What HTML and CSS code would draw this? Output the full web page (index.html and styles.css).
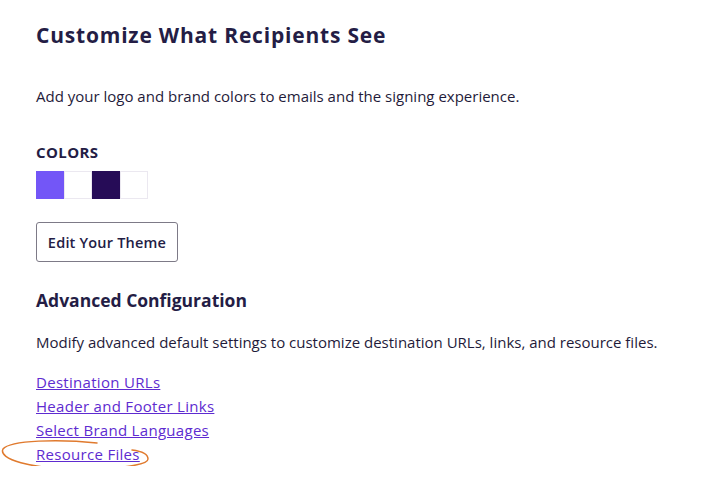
FILE: index.html
```html
<!DOCTYPE html>
<html>
<head>
<meta charset="utf-8">
<link rel="stylesheet" href="styles.css">
</head>
<body>
<main class="page">
  <h1 class="title">Customize What Recipients See</h1>
  <p class="lead">Add your logo and brand colors to emails and the signing experience.</p>
  <h2 class="label">COLORS</h2>
  <div class="swatches">
    <span class="swatch swatch-primary"></span>
    <span class="swatch swatch-white"></span>
    <span class="swatch swatch-dark"></span>
    <span class="swatch swatch-white"></span>
  </div>
  <button class="btn">Edit Your Theme</button>
  <h2 class="subtitle">Advanced Configuration</h2>
  <p class="desc">Modify advanced default settings to customize destination URLs, links, and resource files.</p>
  <ul class="links">
    <li><a href="#">Destination URLs</a></li>
    <li><a href="#">Header and Footer Links</a></li>
    <li><a href="#">Select Brand Languages</a></li>
    <li class="circled"><a href="#">Resource Files</a>
      <svg class="scribble" width="160" height="36" viewBox="0 0 160 36">
        <path d="M97 4 C60 0 10 1 3 10 C-2 20 30 30 80 30 C120 30 148 26 148 20 C148 14 140 12 132 11" fill="none" stroke="#e07a2e" stroke-width="1.5" stroke-linecap="round"/>
      </svg>
    </li>
  </ul>
</main>
</body>
</html>
```
FILE: styles.css
```css
* { box-sizing: border-box; }
body {
  margin: 0;
  background: #ffffff;
  font-family: "Open Sans", "Noto Sans", sans-serif;
  color: #1f1b3a;
}
.page {
  padding: 22px 36px 0 36px;
}
.title {
  margin: 0;
  font-size: 21px;
  line-height: 26px;
  font-weight: 700;
  letter-spacing: 0.8px;
  color: #241d45;
}
.lead {
  margin: 38px 0 0 0;
  font-size: 15px;
  line-height: 20px;
  color: #1f1b3a;
}
.label {
  margin: 36px 0 0 0;
  font-size: 15px;
  line-height: 20px;
  font-weight: 700;
  letter-spacing: 0.4px;
  color: #241d45;
}
.swatches {
  display: flex;
  margin-top: 9px;
}
.swatch {
  width: 28px;
  height: 28px;
  border: 1px solid #ebe8f0;
}
.swatch-primary { background: #7356f7; border-color: #7356f7; }
.swatch-white { background: #ffffff; }
.swatch-dark { background: #260c57; border-color: #260c57; }
.btn {
  display: block;
  margin-top: 23px;
  width: 142px;
  height: 40px;
  padding: 0;
  border: 1px solid #7d7a87;
  border-radius: 3px;
  background: #fff;
  font-family: "Open Sans", "Noto Sans", sans-serif;
  font-size: 14.5px;
  font-weight: 600;
  letter-spacing: 0.2px;
  color: #241d45;
}
.subtitle {
  margin: 26px 0 0 0;
  font-size: 17.5px;
  line-height: 24px;
  font-weight: 700;
  color: #241d45;
}
.desc {
  margin: 20px 0 0 0;
  font-size: 15px;
  line-height: 20px;
  color: #1f1b3a;
}
.links {
  list-style: none;
  margin: 18px 0 0 0;
  padding: 0;
}
.links li {
  font-size: 15px;
  line-height: 24px;
  letter-spacing: 0.3px;
}
.links a {
  color: #5e2bd0;
  text-decoration: underline;
}
.circled { position: relative; }
.scribble {
  position: absolute;
  left: -36px;
  top: -3px;
  overflow: visible;
}
```
